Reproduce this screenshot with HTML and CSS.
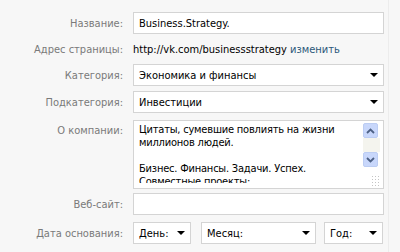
FILE: index.html
```html
<!DOCTYPE html>
<html>
<head>
<meta charset="utf-8">
<link rel="stylesheet" href="styles.css">
</head>
<body>
<div class="panel">
  <div class="row">
    <div class="label">Название:</div>
    <div class="field input"><span class="value">Business.Strategy.</span></div>
  </div>
  <div class="row row-text">
    <div class="label">Адрес страницы:</div>
    <div class="field plain">http://vk.com/businessstrategy <a class="link">изменить</a></div>
  </div>
  <div class="row">
    <div class="label">Категория:</div>
    <div class="field select"><span class="value">Экономика и финансы</span><span class="arrow"></span></div>
  </div>
  <div class="row">
    <div class="label">Подкатегория:</div>
    <div class="field select"><span class="value">Инвестиции</span><span class="arrow"></span></div>
  </div>
  <div class="row row-top">
    <div class="label">О компании:</div>
    <div class="field textarea">
      <div class="ta-text">Цитаты, сумевшие повлиять на жизни<br>миллионов людей.<br><br>Бизнес. Финансы. Задачи. Успех.<br>Совместные проекты:</div>
      <div class="scrollbar">
        <div class="sb-btn"><svg width="9" height="6" viewBox="0 0 9 6"><path d="M1 5 L4.5 1.5 L8 5" fill="none" stroke="#4d6185" stroke-width="1.8"/></svg></div>
        <div class="sb-track"></div>
        <div class="sb-btn"><svg width="9" height="6" viewBox="0 0 9 6"><path d="M1 1 L4.5 4.5 L8 1" fill="none" stroke="#4d6185" stroke-width="1.8"/></svg></div>
        <div class="grip"></div>
      </div>
    </div>
  </div>
  <div class="row row-web">
    <div class="label">Веб-сайт:</div>
    <div class="field input"></div>
  </div>
  <div class="row row-date">
    <div class="label">Дата основания:</div>
    <div class="field dates">
      <div class="select day"><span class="value">День:</span><span class="arrow"></span></div>
      <div class="select month"><span class="value">Месяц:</span><span class="arrow"></span></div>
      <div class="select year"><span class="value">Год:</span><span class="arrow"></span></div>
    </div>
  </div>
</div>
</body>
</html>
```
FILE: styles.css
```css
html, body {
  margin: 0;
  padding: 0;
  background: #f7f7f7;
}
body {
  font-family: "DejaVu Sans Condensed", "DejaVu Sans", sans-serif;
  font-size: 11px;
  color: #000;
  width: 400px;
  height: 252px;
  overflow: hidden;
}
.panel {
  width: 389px;
  height: 252px;
  box-sizing: border-box;
  border-right: 1px solid #ececec;
  padding: 12px 0 0 0;
  display: flex;
  flex-direction: column;
  gap: 5px;
}
.row {
  display: flex;
  align-items: center;
  gap: 10px;
}
.row-top {
  align-items: flex-start;
  margin-top: 2px;
}
.row-top .label {
  padding-top: 4px;
}
.row-text {
  height: 20px;
}
.row-web {
  margin-top: -1px;
}
.row-date {
  margin-top: 2px;
}
.label {
  width: 123px;
  text-align: right;
  color: #7a7a7a;
  flex: none;
}
.field {
  width: 251px;
  box-sizing: border-box;
  flex: none;
}
.input, .select, .textarea {
  background: #fff;
  border: 1px solid #d4d4d4;
  box-sizing: border-box;
}
.input, .select {
  height: 22px;
  display: flex;
  align-items: center;
  padding: 0 5px 0 5px;
}
.plain {
  color: #000;
  white-space: nowrap;
}
.link {
  color: #2b587a;
}
.select .value {
  flex: 1;
}
.arrow {
  width: 0;
  height: 0;
  border-left: 4px solid transparent;
  border-right: 4px solid transparent;
  border-top: 4px solid #000;
}
.textarea {
  height: 69px;
  display: flex;
  align-items: flex-start;
}
.ta-text {
  flex: 1;
  height: 62px;
  overflow: hidden;
  box-sizing: border-box;
  padding: 2px 0 0 5px;
  line-height: 13px;
  letter-spacing: -0.2px;
}
.scrollbar {
  width: 17px;
  flex: none;
  display: flex;
  flex-direction: column;
  padding: 2px 3px 0 0;
}
.sb-btn {
  width: 15px;
  height: 15px;
  background: #c8d7fb;
  border: 1px solid #bccdf3;
  box-sizing: border-box;
  border-radius: 2px;
  display: flex;
  align-items: center;
  justify-content: center;
}
.sb-track {
  height: 14px;
  background: #f4f4ee;
}
.grip {
  height: 12px;
  margin-top: 8px;
  background: radial-gradient(circle, #c4c4c4 0.8px, transparent 1px) right bottom / 3px 3px;
  width: 9px;
  align-self: flex-end;
}
.dates {
  display: flex;
}
.dates .select {
  flex: none;
}
.day { width: 58px; }
.month { width: 115px; margin-left: 10px; }
.year { width: 59px; margin-left: 8px; }
```
